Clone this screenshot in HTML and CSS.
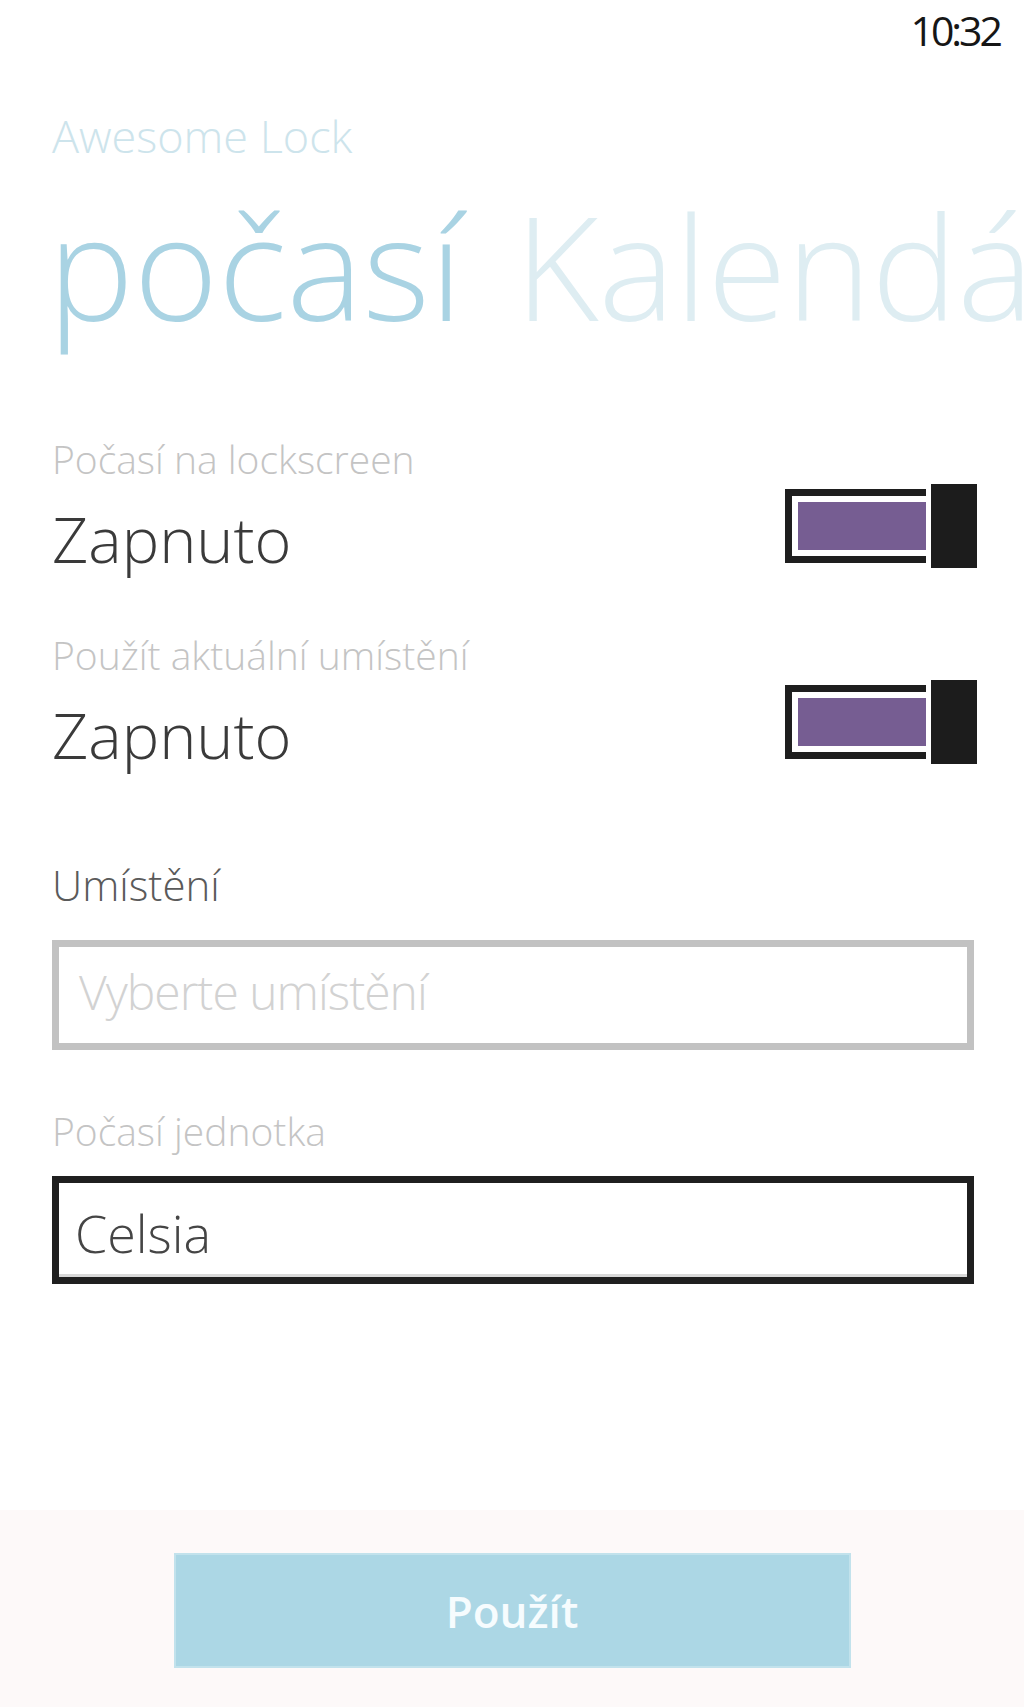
FILE: index.html
```html
<!DOCTYPE html>
<html lang="cs">
<head>
    <meta charset="UTF-8">
    <meta name="viewport" content="width=device-width, initial-scale=1.0">
    <title>Awesome Lock</title>
    <link rel="stylesheet" href="styles.css">
</head>
<body>
    <div class="page">
        <div class="status">
            <span class="time">10:32</span>
        </div>

        <div class="header">
            <div class="app-title">Awesome Lock</div>
            <div class="pivot">
                <span class="pivot-item active">počasí</span>
                <span class="pivot-item">Kalendář</span>
            </div>
        </div>

        <div class="settings">
            <div class="toggle-row">
                <div class="toggle-text">
                    <div class="label">Počasí na lockscreen</div>
                    <div class="value">Zapnuto</div>
                </div>
                <div class="toggle">
                    <div class="track"><div class="fill"></div></div>
                    <div class="thumb"></div>
                </div>
            </div>

            <div class="toggle-row second">
                <div class="toggle-text">
                    <div class="label">Použít aktuální umístění</div>
                    <div class="value">Zapnuto</div>
                </div>
                <div class="toggle">
                    <div class="track"><div class="fill"></div></div>
                    <div class="thumb"></div>
                </div>
            </div>

            <div class="field-title">Umístění</div>
            <div class="box placeholder">Vyberte umístění</div>

            <div class="label unit-label">Počasí jednotka</div>
            <div class="box picker">Celsia</div>
        </div>

        <div class="appbar">
            <button class="apply">Použít</button>
        </div>
    </div>
</body>
</html>
```

FILE: styles.css
```css
body {
    margin: 0;
    background: #ffffff;
    font-family: "Open Sans", "Noto Sans", sans-serif;
    font-weight: 300;
}
.page {
    display: flex;
    flex-direction: column;
    min-height: 1707px;
}
.status {
    display: flex;
    justify-content: flex-end;
    padding: 10px 24px 0 0;
}
.time {
    font-size: 41px;
    line-height: 1;
    font-weight: 400;
    color: #161616;
    letter-spacing: -3px;
}
.header {
    padding-left: 52px;
}
.app-title {
    margin-top: 62px;
    font-size: 45px;
    line-height: 1;
    color: #cde4ec;
}
.pivot {
    margin-top: 17px;
    margin-left: -4px;
    white-space: nowrap;
    overflow: hidden;
    font-size: 144px;
    line-height: 1.25;
    color: #deedf2;
}
.pivot-item.active {
    color: #a9d3e3;
    margin-right: 15px;
}
.settings {
    padding: 0 47px 0 52px;
}
.toggle-row {
    display: flex;
    justify-content: space-between;
    align-items: flex-end;
    margin-top: 84px;
}
.toggle-row.second {
    margin-top: 65px;
}
.label {
    font-size: 39px;
    line-height: 1;
    color: #c4c4c4;
}
.value {
    margin-top: 29px;
    font-size: 63px;
    line-height: 1;
    color: #3a3a3a;
}
.toggle {
    display: flex;
    align-items: center;
    gap: 5px;
    margin-bottom: 2px;
}
.track {
    display: flex;
    width: 128px;
    height: 48px;
    border: 7px solid #1e1e1e;
    border-right: 0;
    padding: 6px 0 6px 6px;
    background: #ffffff;
}
.fill {
    flex: 1;
    background: #765d92;
}
.thumb {
    width: 46px;
    height: 84px;
    background: #1c1c1c;
}
.field-title {
    margin-top: 98px;
    font-size: 42px;
    line-height: 1;
    color: #5a5a5a;
}
.box {
    box-sizing: border-box;
    margin-right: 3px;
    border: 7px solid #c2c2c2;
    line-height: 1;
}
.placeholder {
    margin-top: 34px;
    height: 110px;
    padding: 21px 20px 0;
    font-size: 48px;
    letter-spacing: -1px;
    color: #d2d2d2;
}
.unit-label {
    margin-top: 61px;
}
.picker {
    margin-top: 26px;
    height: 108px;
    padding: 24px 16px 0;
    font-size: 52px;
    border-color: #1f1f1f;
    color: #454545;
    box-shadow: inset 0 -3px 0 #d8d8d8;
}
.appbar {
    margin-top: auto;
    height: 197px;
    box-sizing: border-box;
    padding-top: 43px;
    background: #fdf9f9;
    display: flex;
    justify-content: center;
    align-items: flex-start;
}
.apply {
    width: 677px;
    height: 115px;
    border: 2px solid #c2e2ec;
    background: #acd7e5;
    color: #f6fcfe;
    font-family: "Open Sans", "Noto Sans", sans-serif;
    font-size: 44px;
    font-weight: 600;
    cursor: pointer;
}
```
